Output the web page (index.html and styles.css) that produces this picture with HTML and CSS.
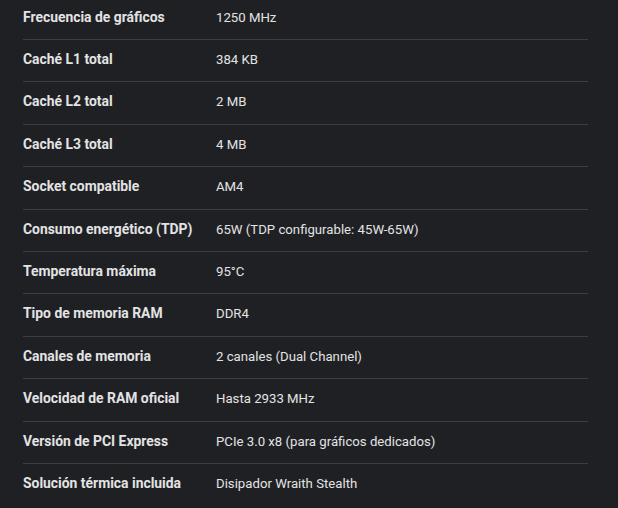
FILE: index.html
```html
<!DOCTYPE html>
<html lang="es">
<head>
<meta charset="utf-8">
<link rel="stylesheet" href="styles.css">
</head>
<body>
<div class="specs">
  <div class="row"><div class="label">Frecuencia de gráficos</div><div class="value">1250 MHz</div></div>
  <div class="row"><div class="label">Caché L1 total</div><div class="value">384 KB</div></div>
  <div class="row"><div class="label">Caché L2 total</div><div class="value">2 MB</div></div>
  <div class="row"><div class="label">Caché L3 total</div><div class="value">4 MB</div></div>
  <div class="row"><div class="label">Socket compatible</div><div class="value">AM4</div></div>
  <div class="row"><div class="label">Consumo energético (TDP)</div><div class="value">65W (TDP configurable: 45W-65W)</div></div>
  <div class="row"><div class="label">Temperatura máxima</div><div class="value">95°C</div></div>
  <div class="row"><div class="label">Tipo de memoria RAM</div><div class="value">DDR4</div></div>
  <div class="row"><div class="label">Canales de memoria</div><div class="value">2 canales (Dual Channel)</div></div>
  <div class="row"><div class="label">Velocidad de RAM oficial</div><div class="value">Hasta 2933 MHz</div></div>
  <div class="row"><div class="label">Versión de PCI Express</div><div class="value">PCIe 3.0 x8 (para gráficos dedicados)</div></div>
  <div class="row"><div class="label">Solución térmica incluida</div><div class="value">Disipador Wraith Stealth</div></div>
</div>
</body>
</html>
```
FILE: styles.css
```css
html, body {
  margin: 0;
  padding: 0;
  background: #1f2023;
  overflow: hidden;
}
body {
  font-family: Roboto, "Noto Sans", Arial, sans-serif;
  font-size: 13px;
  color: #e3e3e3;
}
.specs {
  margin: -2.4px 30px 0 23px;
  display: flex;
  flex-direction: column;
}
.row {
  display: grid;
  grid-template-columns: 193px 1fr;
  align-items: center;
  padding: 10px 0 12px;
  line-height: 19.4px;
  border-bottom: 1px solid #3c3d40;
}
.row:last-child {
  border-bottom: none;
}
.label {
  font-weight: 700;
  font-size: 13.9px;
}
.value {
  font-size: 13.2px;
}
```
